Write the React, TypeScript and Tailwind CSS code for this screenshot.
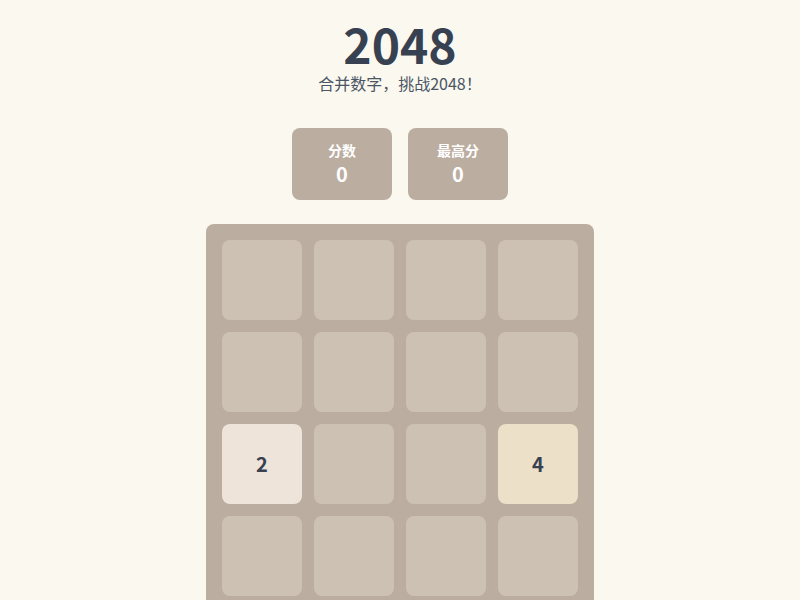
import React from 'react';

const board: number[][] = [
  [0, 0, 0, 0],
  [0, 0, 0, 0],
  [2, 0, 0, 4],
  [0, 0, 0, 0],
];

function tileClass(value: number) {
  if (value === 2) return 'bg-[#eee4da]';
  if (value === 4) return 'bg-[#ede0c8]';
  return 'bg-[#cdc1b4]';
}

function ScoreBox({ label, value }: { label: string; value: number }) {
  return (
    <div className="w-[100px] rounded-lg bg-[#bbada0] py-3 text-center text-white">
      <div className="text-sm font-bold leading-5">{label}</div>
      <div className="text-xl font-bold leading-7">{value}</div>
    </div>
  );
}

export default function App() {
  return (
    <div
      className="min-h-screen bg-[#faf8ef] flex flex-col items-center pt-[14px]"
      style={{ fontFamily: '"Noto Sans CJK SC", "Noto Sans", sans-serif' }}
    >
      <h1 className="text-5xl font-bold leading-[58px] text-[#374151]">2048</h1>
      <p className="mt-[-1px] text-base leading-6 text-[#4b5563]">合并数字，挑战2048！</p>

      <div className="mt-[33px] flex gap-4">
        <ScoreBox label="分数" value={0} />
        <ScoreBox label="最高分" value={0} />
      </div>

      <div className="mt-6 rounded-lg bg-[#bbada0] p-4">
        <div className="grid grid-cols-4 gap-3">
          {board.flat().map((v, i) => (
            <div
              key={i}
              className={`flex h-20 w-20 items-center justify-center rounded-lg ${tileClass(v)}`}
            >
              {v > 0 && <span className="text-xl font-bold text-[#374151]">{v}</span>}
            </div>
          ))}
        </div>
      </div>
    </div>
  );
}
